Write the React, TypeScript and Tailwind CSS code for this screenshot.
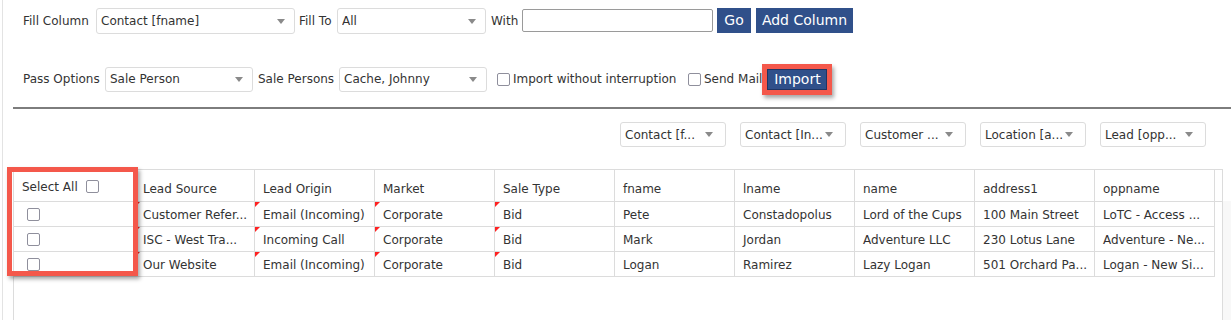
const headers = [
  "Lead Source",
  "Lead Origin",
  "Market",
  "Sale Type",
  "fname",
  "lname",
  "name",
  "address1",
  "oppname",
];

const rows = [
  ["Customer Refer...", "Email (Incoming)", "Corporate", "Bid", "Pete", "Constadopolus", "Lord of the Cups", "100 Main Street", "LoTC - Access ..."],
  ["ISC - West Tra...", "Incoming Call", "Corporate", "Bid", "Mark", "Jordan", "Adventure LLC", "230 Lotus Lane", "Adventure - Ne..."],
  ["Our Website", "Email (Incoming)", "Corporate", "Bid", "Logan", "Ramirez", "Lazy Logan", "501 Orchard Pa...", "Logan - New Si..."],
];

const mapSelects = ["Contact [f...", "Contact [In...", "Customer ...", "Location [a...", "Lead [opp..."];

function Arrow() {
  return <span className="w-0 h-0 border-l-[4px] border-r-[4px] border-t-[5px] border-l-transparent border-r-transparent border-t-[#8a8a8a]" />;
}

function Select({ value, w, h = "h-[26px]", pr = "pr-[9px]" }: { value: string; w: string; h?: string; pr?: string }) {
  return (
    <div className={`${w} ${h} ${pr} flex items-center justify-between border border-[#dcdcdc] rounded-[3px] bg-white pl-[4px]`}>
      <span className="whitespace-nowrap overflow-hidden">{value}</span>
      <Arrow />
    </div>
  );
}

function Check() {
  return <span className="inline-block w-[13px] h-[13px] border border-[#8f8f9c] rounded-[2px] bg-white shrink-0" />;
}

function Dirty() {
  return <span className="absolute top-0 left-0 w-0 h-0 border-t-[5px] border-r-[5px] border-t-[#f22] border-r-transparent" />;
}

export default function App() {
  return (
    <div className="w-[1231px] h-[320px] bg-white overflow-hidden font-['DejaVu_Sans',sans-serif] text-[12px] text-[#333] pl-[2px]">
      <div className="h-full border-l border-[#e3e3e3] flex flex-col">
        {/* fill row */}
        <div className="flex items-center h-[27px] mt-[7px] pl-[20px] whitespace-nowrap">
          <span className="w-[69px]">Fill Column</span>
          <div className="ml-[4px] mt-[1px]">
            <Select value="Contact [fname]" w="w-[199px]" />
          </div>
          <span className="ml-[4px] w-[34px]">Fill To</span>
          <div className="ml-[4px] mt-[1px]">
            <Select value="All" w="w-[149px]" />
          </div>
          <span className="ml-[5px] w-[27px]">With</span>
          <input className="ml-[4px] w-[191px] h-[23px] border border-[#9a9a9a] rounded-[2px] outline-none" />
          <button className="ml-[4px] w-[34px] h-[25px] bg-[#30508a] text-white text-[14px]">Go</button>
          <button className="ml-[5px] w-[97px] h-[25px] bg-[#30508a] text-white text-[14px]">Add Column</button>
        </div>

        {/* pass row */}
        <div className="flex items-center h-[32px] mt-[29px] pl-[20px] whitespace-nowrap">
          <span className="w-[78px]">Pass Options</span>
          <div className="ml-[4px]">
            <Select value="Sale Person" w="w-[148px]" h="h-[25px]" />
          </div>
          <span className="ml-[5px] w-[76px]">Sale Persons</span>
          <div className="ml-[5px]">
            <Select value="Cache, Johnny" w="w-[148px]" h="h-[25px]" />
          </div>
          <span className="ml-[10px] flex items-center">
            <Check />
          </span>
          <span className="ml-[3px] w-[166px]">Import without interruption</span>
          <span className="ml-[9px] flex items-center">
            <Check />
          </span>
          <span className="ml-[3px]">Send Mail</span>
          <div className="ml-0 border-[5px] border-[#f4584b] shadow-[2px_3px_4px_rgba(0,0,0,0.35)]">
            <button className="block w-[60px] h-[21px] bg-[#30508a] border border-[#1f3563] text-white text-[14px] leading-[19px]">Import</button>
          </div>
        </div>

        <div className="ml-[10px] mt-[12px] h-[2px] bg-[#7d7d7d]" />

        {/* column mapping selects */}
        <div className="ml-[10px] mt-[13px] flex pl-[602px]">
          {mapSelects.map((s) => (
            <div key={s} className="w-[120px] pl-[5px]">
              <Select value={s} w="w-[106px]" h="h-[25px]" pr="pr-[12px]" />
            </div>
          ))}
        </div>

        {/* table */}
        <div className="mt-[22px] flex-1 flex">
          <div className="ml-[10px] w-[1210px] border-l border-r border-t border-[#dcdcdc] relative">
            <div className="flex h-[32px] border-b border-[#dcdcdc]">
              <div className="w-[121px] border-r border-[#dcdcdc] flex items-center pl-[8px] pt-[2px]">
                <span>Select All</span>
                <span className="ml-[8px] flex">
                  <Check />
                </span>
              </div>
              {headers.map((h) => (
                <div key={h} className="w-[120px] border-r border-[#dcdcdc] flex items-center pl-[8px] pt-[6px]">
                  {h}
                </div>
              ))}
              <div className="flex-1" />
            </div>
            {rows.map((r, i) => (
              <div key={i} className="flex h-[25px]">
                <div className="w-[121px] border-r border-b border-[#dcdcdc] flex items-center pl-[13px]">
                  <Check />
                </div>
                {r.map((c, j) => (
                  <div key={j} className="relative w-[120px] border-r border-b border-[#dcdcdc] flex items-center pl-[8px] pt-[1px] whitespace-nowrap overflow-hidden">
                    {j < 4 && <Dirty />}
                    {c}
                  </div>
                ))}
              </div>
            ))}

            {/* highlight around the select column */}
            <div className="absolute left-[-7px] top-[-3px] w-[131px] h-[109px] border-[5px] border-[#f4584b] shadow-[2px_3px_4px_rgba(0,0,0,0.35)]" />
          </div>
          <div className="flex-1 mt-[32px] bg-[#f8f8f8]" />
        </div>
      </div>
    </div>
  );
}
